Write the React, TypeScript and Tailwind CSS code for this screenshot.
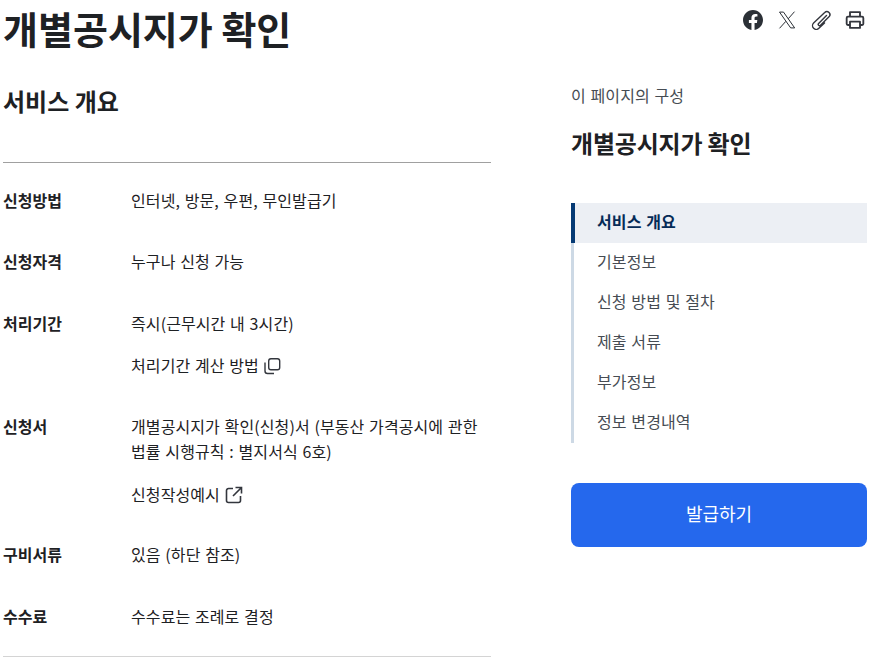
import React from "react";

function Row({ label, children, className = "" }: { label: string; children: React.ReactNode; className?: string }) {
  return (
    <div className={`flex ${className}`}>
      <div className="w-[128px] shrink-0 text-[16px] leading-[25px] font-bold text-[#1e2124]">{label}</div>
      <div className="flex-1 pr-[12px] text-[16px] leading-[25px] text-[#1e2124] tracking-[0.1px] [word-spacing:1px]">{children}</div>
    </div>
  );
}

function Copy() {
  return (
    <svg width="18" height="18" viewBox="0 0 18 18" fill="none" stroke="#33363d" strokeWidth="1.4" className="ml-[4px] mt-[1px]">
      <rect x="5.7" y="1.7" width="11" height="11" rx="2.2" />
      <path d="M2 5.5V14a2.5 2.5 0 0 0 2.5 2.5H11" />
    </svg>
  );
}

function External() {
  return (
    <svg width="18" height="18" viewBox="0 0 18 18" fill="none" stroke="#33363d" strokeWidth="1.6" className="ml-[5px]">
      <path d="M8 2.5H3.5A2 2 0 0 0 1.5 4.5v10a2 2 0 0 0 2 2h10a2 2 0 0 0 2-2V10" />
      <path d="M10.5 1.5h6v6M16.5 1.5 8 10" />
    </svg>
  );
}

export default function App() {
  return (
    <div className="w-[882px] h-[662px] overflow-hidden bg-white pl-[3px] pr-[15px] font-['Noto_Sans_CJK_KR','Noto_Sans',sans-serif] text-[#1e2124]">
      <div className="flex justify-between items-start h-[56px]">
        <h1 className="text-[38px] leading-[56px] font-bold text-[#1e2124]">개별공시지가 확인</h1>
        <div className="flex items-center gap-[14px] mt-[10px] mr-[2px]">
          <svg width="20" height="20" viewBox="0 0 24 24" fill="#2b3036">
            <path d="M24 12.07C24 5.4 18.63 0 12 0S0 5.4 0 12.07c0 6.02 4.39 11.01 10.13 11.93v-8.44H7.08v-3.49h3.05V9.41c0-3.02 1.79-4.69 4.53-4.69 1.31 0 2.68.24 2.68.24v2.97h-1.51c-1.49 0-1.96.93-1.96 1.89v2.25h3.33l-.53 3.49h-2.8V24C19.61 23.08 24 18.09 24 12.07Z" />
          </svg>
          <svg width="20" height="20" viewBox="0 0 24 24" fill="none" stroke="#2b3036" strokeWidth="1.2">
            <path d="M3 2.5h4.8l13.4 19H16.4L3 2.5Z" />
            <path d="M21 2 13.4 10.6M10.6 13.6 3 22" />
          </svg>
          <svg width="20" height="20" viewBox="0 0 20 20" fill="none" stroke="#33363d" strokeWidth="1.4" strokeLinecap="round" strokeLinejoin="round">
            <path d="M15.5 5.5 7.6 13.4a1.3 1.3 0 0 0 1.9 1.9L18 6.8a3 3 0 0 0-4.3-4.3L2.6 13.1a3.7 3.7 0 0 0 5.3 5.2L13.5 13" />
          </svg>
          <svg width="20" height="20" viewBox="0 0 24 24" fill="none" stroke="#33363d" strokeWidth="2.2" strokeLinejoin="round">
            <path d="M6 8V2.5h12V8" />
            <path d="M6 18H3.5a1.5 1.5 0 0 1-1.5-1.5v-7A1.5 1.5 0 0 1 3.5 8h17A1.5 1.5 0 0 1 22 9.5v7a1.5 1.5 0 0 1-1.5 1.5H18" />
            <path d="M6 14h12v7.5H6z" />
          </svg>
        </div>
      </div>

      <div className="flex justify-between">
        <main className="w-[488px]">
          <h2 className="mt-[27px] text-[24px] leading-[36px] font-bold">서비스 개요</h2>
          <div className="mt-[43px] border-t border-[#a0a0a0] pt-[25px] pb-[27px] flex flex-col gap-[36px]">
            <Row label="신청방법">인터넷, 방문, 우편, 무인발급기</Row>
            <Row label="신청자격">누구나 신청 가능</Row>
            <Row label="처리기간" className="mt-[1px]">
              <div>즉시(근무시간 내 3시간)</div>
              <div className="mt-[17px] flex items-center">처리기간 계산 방법<Copy /></div>
            </Row>
            <Row label="신청서">
              <div>개별공시지가 확인(신청)서 (부동산 가격공시에 관한 법률 시행규칙 : 별지서식 6호)</div>
              <div className="mt-[18px] flex items-center">신청작성예시<External /></div>
            </Row>
            <Row label="구비서류" className="mt-[-1px]">있음 (하단 참조)</Row>
            <Row label="수수료" className="mt-[1px]">수수료는 조례로 결정</Row>
          </div>
          <div className="border-t border-[#d4d4d4]" />
        </main>

        <aside className="w-[296px]">
          <p className="mt-[27px] text-[16px] leading-[25.6px] text-[#464c53] tracking-[0.1px] [word-spacing:1px]">이 페이지의 구성</p>
          <h3 className="mt-[17px] text-[24px] leading-[34px] font-bold tracking-[-0.2px]">개별공시지가 확인</h3>
          <nav className="mt-[43px] border-l-[3px] border-[#cdd9e5] text-[16px] leading-[25.6px] text-[#464c53] tracking-[0.1px] [word-spacing:1px]">
            <div className="relative h-[40px] bg-[#eceff4] pl-[23px] pb-[1px] flex items-center font-bold text-[#052b57]">
              <span className="absolute left-[-3px] top-0 h-full w-[4px] bg-[#063a74]" />
              서비스 개요
            </div>
            <div className="h-[40px] pl-[23px] pb-[1px] flex items-center">기본정보</div>
            <div className="h-[40px] pl-[23px] pb-[1px] flex items-center">신청 방법 및 절차</div>
            <div className="h-[40px] pl-[23px] pb-[1px] flex items-center">제출 서류</div>
            <div className="h-[40px] pl-[23px] pb-[1px] flex items-center">부가정보</div>
            <div className="h-[40px] pl-[23px] pb-[1px] flex items-center">정보 변경내역</div>
          </nav>
          <button className="mt-[40px] w-full h-[64px] rounded-[8px] bg-[#2568ed] pb-[2px] text-white text-[18px] flex items-center justify-center">발급하기</button>
        </aside>
      </div>
    </div>
  );
}
